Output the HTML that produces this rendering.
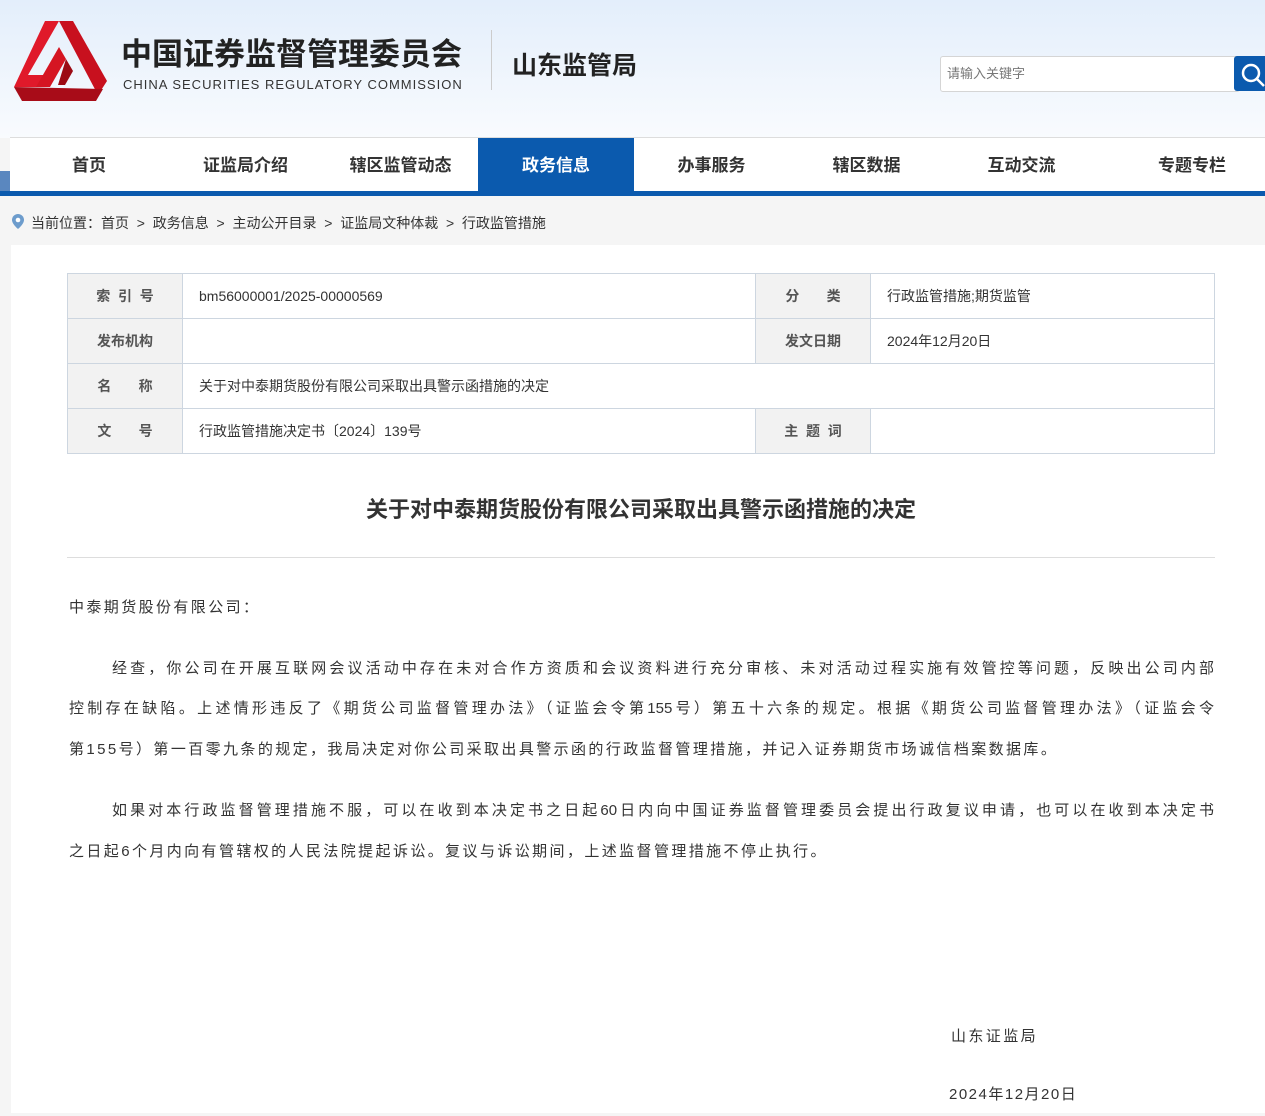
<!DOCTYPE html>
<html><head><meta charset="utf-8"><style>
*{margin:0;padding:0;box-sizing:border-box}
body{width:1265px;height:1113px;overflow:hidden;background:#f5f5f5;font-family:"Liberation Sans","Noto Sans CJK SC",sans-serif;color:#333;position:relative}
.hdr{position:absolute;left:0;top:0;width:1265px;height:138px;background:linear-gradient(#e3eefb,#f9fbfe)}
.nav{position:absolute;left:10px;top:137px;width:1255px;height:54px;background:#fff;border-top:1px solid #ddd}
.nav span{position:absolute;top:0;height:54px;line-height:56px;font-size:17px;font-weight:bold;color:#333;text-align:center}
.nav .act{background:#0b5aae;color:#fff}
.bar{position:absolute;left:0;top:191px;width:1265px;height:5px;background:#0b5aae}
.lb{position:absolute;left:0;top:171px;width:10px;height:25px;background:#5a87bf}
.crumb{position:absolute;left:11px;top:213px;font-size:14px;color:#333}
.main{position:absolute;left:11px;top:245px;width:1254px;height:868px;background:#fff}
table{position:absolute;left:67px;top:273px;width:1148px;border-collapse:collapse;font-size:14px}
td{border:1px solid #cdd6e0;height:45px;padding-left:16px}
td.l{background:#f2f2f2;font-weight:bold;color:#555;text-align:center;padding:0;width:115px}
h1{position:absolute;left:0;width:1282px;top:492px;text-align:center;font-size:22px;font-weight:bold;color:#333}
.hr{position:absolute;left:67px;top:557px;width:1148px;height:1px;background:#ddd}
.t{position:absolute;left:69px;width:1145px;font-size:15px;line-height:40.5px;letter-spacing:2.4px;color:#333;white-space:nowrap}
.j{text-align:justify;text-align-last:justify;letter-spacing:0}
</style></head><body>
<div class="hdr"></div>
<svg style="position:absolute;left:10px;top:19px" width="98" height="85" viewBox="0 0 98 85">
<polygon points="49,2 63,2 97,62 88,76 " fill="#c8101e"/>
<polygon points="35,2 49,2 18,56 40,56 33,68 4,68 " fill="#e0192a"/>
<polygon points="4,68 12,82 86,82 93,70 " fill="#a80c18"/>
<polygon points="49,28 56,40 40,68 26,68 " fill="#d51522"/>
<polygon points="56,40 63,52 55,66 48,66" fill="#9c0a14"/>
</svg>
<div style="position:absolute;left:121px;top:29px;font-size:31px;font-weight:bold;color:#222">中国证券监督管理委员会</div>
<div style="position:absolute;left:123px;top:77px;font-size:13px;color:#333;letter-spacing:1px">CHINA SECURITIES REGULATORY COMMISSION</div>
<div style="position:absolute;left:491px;top:30px;width:1px;height:60px;background:#ccc"></div>
<div style="position:absolute;left:512px;top:46px;font-size:25px;font-weight:bold;color:#222">山东监管局</div>
<div style="position:absolute;left:940px;top:56px;width:300px;height:36px;background:#fff;border:1px solid #d5d5d5;border-radius:3px;font-size:13px;color:#777;line-height:34px;padding-left:6px">请输入关键字</div>
<div style="position:absolute;left:1234px;top:56px;width:31px;height:35px;background:#0b5aae;border-radius:3px 0 0 3px"></div>
<svg style="position:absolute;left:1240px;top:62px" width="25" height="25"><circle cx="11" cy="11" r="8" fill="none" stroke="#fff" stroke-width="2.5"/><line x1="17" y1="17" x2="24" y2="24" stroke="#fff" stroke-width="2.5"/></svg>
<div class="lb"></div>
<div class="nav">
<span style="left:0;width:158px">首页</span>
<span style="left:158px;width:155px">证监局介绍</span>
<span style="left:313px;width:155px">辖区监管动态</span>
<span class="act" style="left:468px;width:156px">政务信息</span>
<span style="left:624px;width:155px">办事服务</span>
<span style="left:779px;width:155px">辖区数据</span>
<span style="left:934px;width:155px">互动交流</span>
<span style="left:1100px;width:164px">专题专栏</span>
</div>
<div class="bar"></div>
<svg style="position:absolute;left:11px;top:213px" width="14" height="17"><path d="M7 1a6 6 0 0 0-6 6c0 4 6 9 6 9s6-5 6-9a6 6 0 0 0-6-6z" fill="#6d9ccc"/><circle cx="7" cy="7" r="2.3" fill="#fff"/></svg>
<div class="crumb" style="left:31px">当前位置：首页&nbsp; &gt; &nbsp;政务信息&nbsp; &gt; &nbsp;主动公开目录&nbsp; &gt; &nbsp;证监局文种体裁&nbsp; &gt; &nbsp;行政监管措施</div>
<div class="main"></div>
<table>
<tr><td class="l">索&nbsp; 引&nbsp; 号</td><td style="width:573px">bm56000001/2025-00000569</td><td class="l">分&nbsp;&nbsp;&nbsp;&nbsp;&nbsp;&nbsp;&nbsp;类</td><td>行政监管措施;期货监管</td></tr>
<tr><td class="l">发布机构</td><td></td><td class="l">发文日期</td><td>2024年12月20日</td></tr>
<tr><td class="l">名&nbsp;&nbsp;&nbsp;&nbsp;&nbsp;&nbsp;&nbsp;称</td><td colspan="3">关于对中泰期货股份有限公司采取出具警示函措施的决定</td></tr>
<tr><td class="l">文&nbsp;&nbsp;&nbsp;&nbsp;&nbsp;&nbsp;&nbsp;号</td><td>行政监管措施决定书〔2024〕139号</td><td class="l">主&nbsp; 题&nbsp; 词</td><td></td></tr>
</table>
<h1>关于对中泰期货股份有限公司采取出具警示函措施的决定</h1>
<div class="hr"></div>
<div class="t" style="top:588px">中泰期货股份有限公司：</div>
<div class="t j" style="top:649px;left:112px;width:1102px;white-space:normal">经查，你公司在开展互联网会议活动中存在未对合作方资质和会议资料进行充分审核、未对活动过程实施有效管控等问题，反映出公司内部</div>
<div class="t j" style="top:689px;white-space:normal">控制存在缺陷。上述情形违反了《期货公司监督管理办法》（证监会令第155号）第五十六条的规定。根据《期货公司监督管理办法》（证监会令</div>
<div class="t" style="top:730px">第155号）第一百零九条的规定，我局决定对你公司采取出具警示函的行政监督管理措施，并记入证券期货市场诚信档案数据库。</div>
<div class="t j" style="top:791px;left:112px;width:1102px;white-space:normal">如果对本行政监督管理措施不服，可以在收到本决定书之日起60日内向中国证券监督管理委员会提出行政复议申请，也可以在收到本决定书</div>
<div class="t" style="top:832px">之日起6个月内向有管辖权的人民法院提起诉讼。复议与诉讼期间，上述监督管理措施不停止执行。</div>
<div class="t" style="top:1017px;left:951px;width:200px">山东证监局</div>
<div class="t" style="top:1075px;left:949px;width:200px;letter-spacing:1.5px">2024年12月20日</div>
</body></html>
